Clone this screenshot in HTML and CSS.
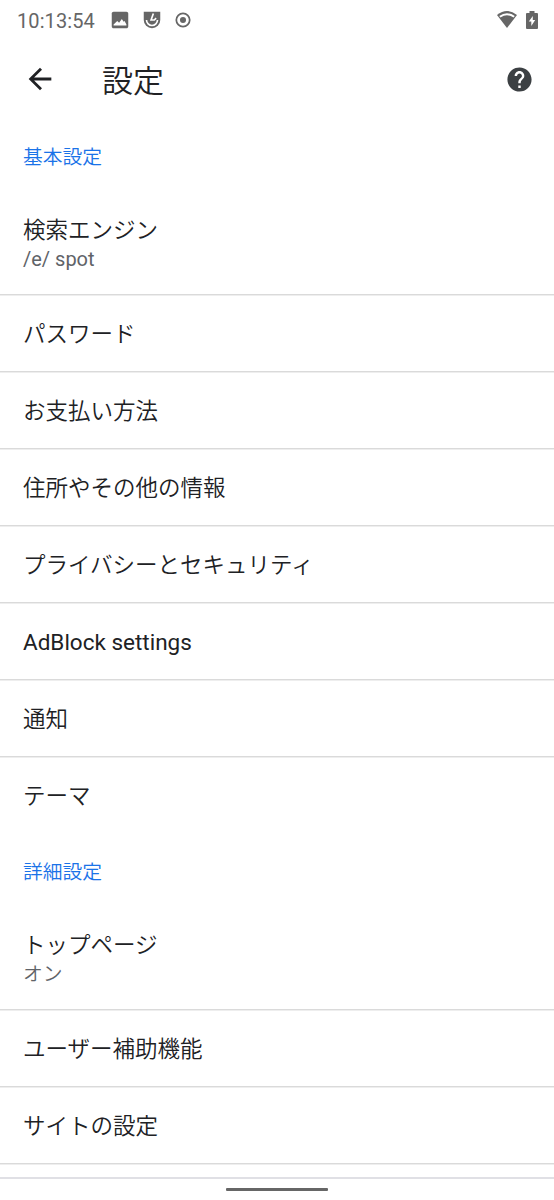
FILE: index.html
```html
<!DOCTYPE html>
<html lang="ja">
<head>
<meta charset="utf-8">
<title>設定</title>
<link rel="stylesheet" href="styles.css">
</head>
<body>
<div class="screen">
  <header class="status">
    <span class="clock">10:13:54</span>
    <svg class="notif" viewBox="0 0 24 24"><path d="M21 19V5c0-1.100-.9-2-2-2H5c-1.100 0-2 .9-2 2v14c0 1.100.9 2 2 2h14c1.100 0 2-.9 2-2z"/><path d="M5 18v-1l4-4 2 2 3-4 2 3 1-1 2 4v1z" fill="#fff"/></svg>
    <svg class="notif" viewBox="0 0 24 24"><path d="M3 3h18v9a9 9 0 0 1-18 0z"/><path d="M13.500 5L11 12h3.500l2-2M6 12a6 6 0 0 0 12 0" fill="none" stroke="#fff" stroke-width="1.800"/></svg>
    <svg class="notif" viewBox="0 0 24 24"><circle cx="12" cy="12" r="7.300" fill="none" stroke="#666" stroke-width="1.900"/><circle cx="12" cy="12" r="3.300"/></svg>
    <span class="spacer"></span>
    <svg class="wifi" viewBox="0 0 20 18"><path d="M0 4Q10-4 20 4L10 17z"/><path d="M2.200 5Q10-.5 17.800 5L16.500 6.600Q10 1.800 3.500 6.600z" fill="#fff"/></svg>
    <svg class="battery" viewBox="0 0 12 20"><path d="M3.500 1h5v2H11q1 0 1 1v14q0 1-1 1H1q-1 0-1-1V4q0-1 1-1h2.500z"/><path d="M6.800 6v4h2.400L5.300 16v-4.500H2.800z" fill="#fff"/></svg>
  </header>
  <div class="toolbar">
    <svg class="back" viewBox="0 0 24 24"><path d="M20 11H7.830l5.590-5.590L12 4l-8 8 8 8 1.410-1.410L7.830 13H20v-2z"/></svg>
    <h1 class="title">設定</h1>
    <svg class="help" viewBox="0 0 24 24"><path d="M12 2C6.480 2 2 6.480 2 12s4.480 10 10 10 10-4.480 10-10S17.520 2 12 2zm1 17h-2v-2h2v2zm2.070-7.750l-.9.920C13.450 12.900 13 13.500 13 15h-2v-.5c0-1.100.45-2.100 1.170-2.830l1.240-1.260c.37-.36.59-.86.59-1.410 0-1.100-.9-2-2-2s-2 .9-2 2H8c0-2.210 1.790-4 4-4s4 1.790 4 4c0 .88-.36 1.680-.93 2.250z"/></svg>
  </div>
  <main class="list">
    <h2 class="section">基本設定</h2>
    <div class="row double"><div class="label">検索エンジン</div><div class="sub latin">/e/ spot</div></div>
    <div class="row">パスワード</div>
    <div class="row">お支払い方法</div>
    <div class="row">住所やその他の情報</div>
    <div class="row">プライバシーとセキュリティ</div>
    <div class="row latin">AdBlock settings</div>
    <div class="row">通知</div>
    <div class="row last">テーマ</div>
    <h2 class="section second">詳細設定</h2>
    <div class="row double"><div class="label">トップページ</div><div class="sub">オン</div></div>
    <div class="row">ユーザー補助機能</div>
    <div class="row">サイトの設定</div>
  </main>
  <footer class="nav"><div class="handle"></div></footer>
</div>
</body>
</html>
```
FILE: styles.css
```css
* { box-sizing: border-box; }
body { margin: 0; background: #fff; color: #202124; font-family: Roboto, "Noto Sans CJK JP", sans-serif; font-weight: 350; }
.screen { height: 1200px; display: flex; flex-direction: column; overflow: hidden; }
.status { height: 40px; flex: none; display: flex; align-items: center; padding: 0 16px 0 17px; color: #666; fill: #666; }
.clock { font-size: 20px; font-weight: 450; width: 92px; padding-top: 1px; letter-spacing: 0.1px; }
.notif { width: 22px; height: 22px; margin-right: 9.500px; }
.spacer { flex: 1; }
.wifi { width: 20px; height: 18px; margin-right: 9px; }
.battery { width: 12px; height: 20px; }
.toolbar { height: 77px; flex: none; display: flex; align-items: center; padding: 1px 20px 0 23px; fill: #202124; }
.back { width: 34px; height: 34px; margin-right: 45px; }
.title { margin: 0; flex: 1; font-size: 31px; font-weight: 350; line-height: 40px; padding-top: 5px; }
.help { width: 29px; height: 29px; fill: #3c4043; }
.list { flex: 1; overflow: hidden; }
.section { margin: 0; height: 77px; padding-left: 23px; font-size: 19.800px; line-height: 82px; font-weight: 350; color: #1a73e8; }
.row { height: 77px; padding: 1px 0 0 23px; border-bottom: 1px solid #dadada; box-shadow: 0 1px #eee; font-size: 22.500px; line-height: 76px; }
.double { height: 101px; padding-top: 20px; }
.label { line-height: 32px; }
.sub { font-size: 19.800px; line-height: 28px; color: #5f6368; }
.latin { font-weight: 400; }
.sub.latin { font-size: 20px; line-height: 26px; }
.last { height: 76px; border-bottom: 0; box-shadow: none; }
.second { height: 76px; line-height: 80px; }
.nav { height: 23px; flex: none; border-top: 2px solid #e0e0e5; padding-top: 9px; }
.handle { width: 102px; height: 3px; margin: 0 auto; border-radius: 1px; background: #666; }
```
